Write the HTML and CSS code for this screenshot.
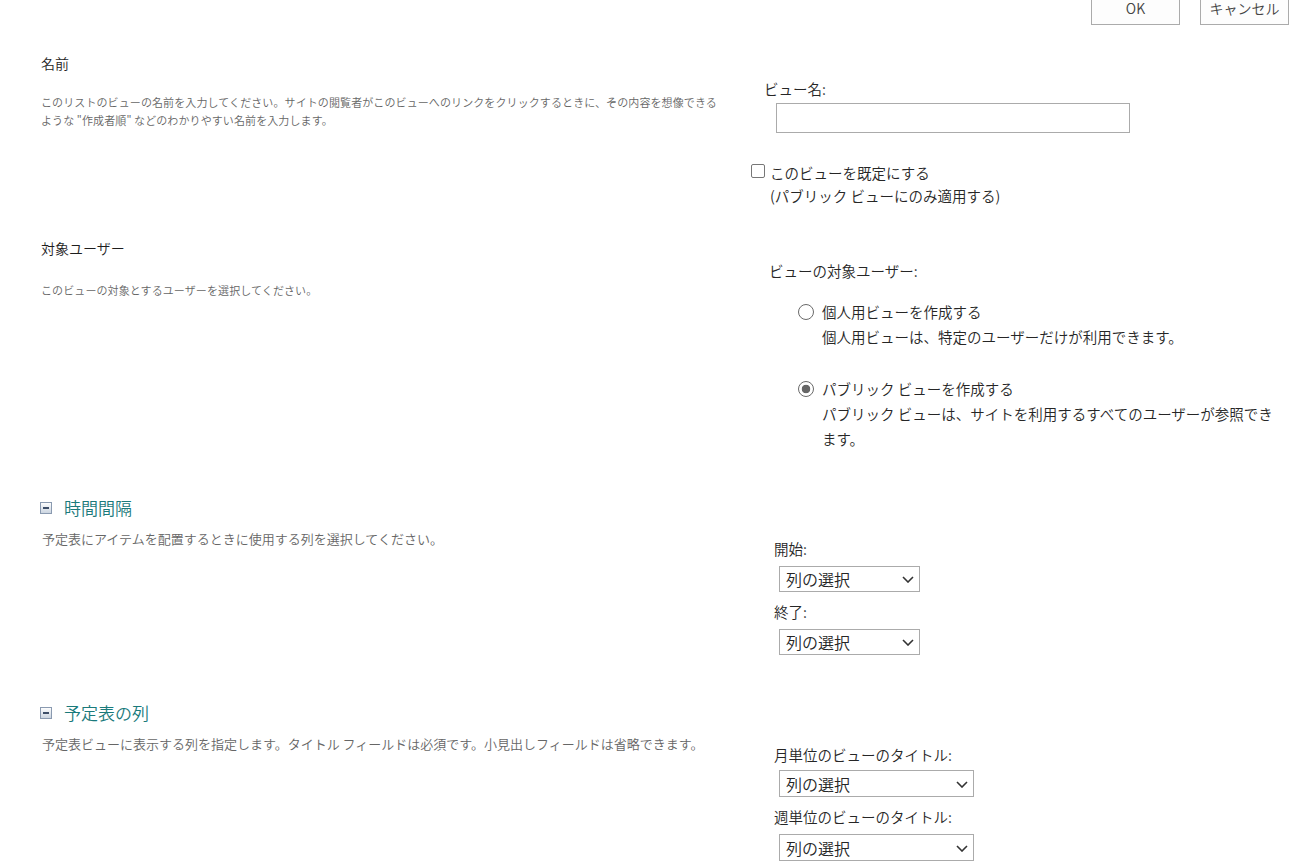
FILE: index.html
```html
<!DOCTYPE html>
<html lang="ja">
<head>
<meta charset="utf-8">
<title>ビューの作成</title>
<link rel="stylesheet" href="styles.css">
</head>
<body>
<div class="page">
  <div class="toolbar">
    <button class="btn" type="button">OK</button>
    <button class="btn" type="button">キャンセル</button>
  </div>

  <section class="sec sec-name">
    <div class="left">
      <h3 class="head">名前</h3>
      <p class="desc-s">このリストのビューの名前を入力してください。サイトの閲覧者がこのビューへのリンクをクリックするときに、その内容を想像できる<br>ような "作成者順" などのわかりやすい名前を入力します。</p>
    </div>
    <div class="right right-name">
      <div class="label label-name">ビュー名:</div>
      <input class="text-input" type="text">
      <label class="check-row">
        <input class="check" type="checkbox">
        <span class="check-text">このビューを既定にする<br>(パブリック ビューにのみ適用する)</span>
      </label>
    </div>
  </section>

  <section class="sec sec-audience">
    <div class="left">
      <h3 class="head">対象ユーザー</h3>
      <p class="desc-s desc-aud">このビューの対象とするユーザーを選択してください。</p>
    </div>
    <div class="right right-aud">
      <div class="label label-aud">ビューの対象ユーザー:</div>
      <div class="options">
        <label class="option">
          <input class="radio" type="radio" name="aud">
          <span class="option-text">個人用ビューを作成する<br>個人用ビューは、特定のユーザーだけが利用できます。</span>
        </label>
        <label class="option">
          <input class="radio" type="radio" name="aud" checked>
          <span class="option-text">パブリック ビューを作成する<br>パブリック ビューは、サイトを利用するすべてのユーザーが参照できます。</span>
        </label>
      </div>
    </div>
  </section>

  <section class="sec sec-interval">
    <div class="left">
      <h3 class="sec-title">
        <svg class="collapse" width="12" height="12" viewBox="0 0 12 12" aria-hidden="true">
          <defs>
            <linearGradient id="cg1" x1="0" y1="0" x2="0" y2="1">
              <stop offset="0" stop-color="#ffffff"/>
              <stop offset="1" stop-color="#c9d3df"/>
            </linearGradient>
          </defs>
          <rect x="0.5" y="0.5" width="11" height="11" fill="url(#cg1)" stroke="#8a9ab0"/>
          <rect x="3" y="5" width="6" height="2" fill="#3d4e68"/>
        </svg>
        <span>時間間隔</span>
      </h3>
      <p class="desc-m">予定表にアイテムを配置するときに使用する列を選択してください。</p>
    </div>
    <div class="right right-interval">
      <div class="label label-sel">開始:</div>
      <div class="select-wrap sel-short">
        <select class="select"><option>列の選択</option></select>
        <svg class="chev" width="12" height="7" viewBox="0 0 12 7" aria-hidden="true"><path d="M1 1l5 5 5-5" fill="none" stroke="#333" stroke-width="1.6"/></svg>
      </div>
      <div class="label label-sel label-next">終了:</div>
      <div class="select-wrap sel-short">
        <select class="select"><option>列の選択</option></select>
        <svg class="chev" width="12" height="7" viewBox="0 0 12 7" aria-hidden="true"><path d="M1 1l5 5 5-5" fill="none" stroke="#333" stroke-width="1.6"/></svg>
      </div>
    </div>
  </section>

  <section class="sec sec-columns">
    <div class="left">
      <h3 class="sec-title">
        <svg class="collapse" width="12" height="12" viewBox="0 0 12 12" aria-hidden="true">
          <defs>
            <linearGradient id="cg2" x1="0" y1="0" x2="0" y2="1">
              <stop offset="0" stop-color="#ffffff"/>
              <stop offset="1" stop-color="#c9d3df"/>
            </linearGradient>
          </defs>
          <rect x="0.5" y="0.5" width="11" height="11" fill="url(#cg2)" stroke="#8a9ab0"/>
          <rect x="3" y="5" width="6" height="2" fill="#3d4e68"/>
        </svg>
        <span>予定表の列</span>
      </h3>
      <p class="desc-m">予定表ビューに表示する列を指定します。タイトル フィールドは必須です。小見出しフィールドは省略できます。</p>
    </div>
    <div class="right right-columns">
      <div class="label label-sel">月単位のビューのタイトル:</div>
      <div class="select-wrap sel-long sel-first">
        <select class="select"><option>列の選択</option></select>
        <svg class="chev" width="12" height="7" viewBox="0 0 12 7" aria-hidden="true"><path d="M1 1l5 5 5-5" fill="none" stroke="#333" stroke-width="1.6"/></svg>
      </div>
      <div class="label label-sel label-next">週単位のビューのタイトル:</div>
      <div class="select-wrap sel-long">
        <select class="select"><option>列の選択</option></select>
        <svg class="chev" width="12" height="7" viewBox="0 0 12 7" aria-hidden="true"><path d="M1 1l5 5 5-5" fill="none" stroke="#333" stroke-width="1.6"/></svg>
      </div>
    </div>
  </section>
</div>
</body>
</html>
```

FILE: styles.css
```css
* {
  box-sizing: border-box;
}

html, body {
  margin: 0;
  padding: 0;
  background: #ffffff;
}

body {
  font-family: "Noto Sans CJK JP", "Noto Sans", sans-serif;
  font-weight: 350;
  color: #262626;
  overflow: hidden;
}

.page {
  width: 1315px;
}

/* top buttons */
.toolbar {
  display: flex;
  justify-content: flex-end;
  align-items: flex-end;
  gap: 20px;
  height: 25px;
  padding-right: 26px;
}

.btn {
  flex: none;
  width: 89px;
  height: 35px;
  border: 1px solid #ababab;
  background: #fdfdfd;
  color: #444444;
  font-family: "Noto Sans CJK JP", "Noto Sans", sans-serif;
  font-weight: 350;
  font-size: 14px;
  line-height: 1;
  padding: 0;
}

/* sections */
.sec {
  display: flex;
  align-items: flex-start;
}

.left {
  flex: none;
  width: 750px;
  padding-left: 41px;
}

.right {
  flex: 1;
}

.head {
  margin: 0;
  font-size: 14px;
  line-height: 20px;
  font-weight: 350;
  color: #1e1e1e;
}

.desc-s {
  margin: 20px 0 0;
  font-size: 11px;
  line-height: 18px;
  color: #666666;
  letter-spacing: 0.1px;
}

.desc-aud {
  margin-top: 23px;
}

.label {
  font-size: 14.5px;
  line-height: 20px;
  color: #262626;
}

/* section 1 */
.sec-name {
  margin-top: 28px;
}

.right-name {
  padding-top: 26px;
}

.label-name {
  padding-left: 14px;
}

.text-input {
  display: block;
  margin: 4px 0 0 26px;
  width: 354px;
  height: 30px;
  border: 1px solid #ababab;
  background: #ffffff;
  outline: none;
}

.check-row {
  display: flex;
  align-items: flex-start;
  margin-top: 28px;
}

.check {
  appearance: none;
  -webkit-appearance: none;
  flex: none;
  width: 14px;
  height: 14px;
  margin: 3px 5px 0 1px;
  border: 1px solid #777777;
  border-radius: 2px;
  background: #ffffff;
}

.check-text {
  font-size: 14.5px;
  line-height: 23px;
  color: #262626;
}

/* section 2 */
.sec-audience {
  margin-top: 31px;
}

.right-aud {
  padding-top: 23px;
}

.label-aud {
  padding-left: 19px;
}

.options {
  padding-left: 48px;
  margin-top: 18px;
}

.option {
  display: flex;
  align-items: flex-start;
  gap: 8px;
}

.option + .option {
  margin-top: 27px;
}

.radio {
  appearance: none;
  -webkit-appearance: none;
  flex: none;
  width: 16px;
  height: 16px;
  margin: 5px 0 0;
  border: 1px solid #6a6a6a;
  border-radius: 50%;
  background: #ffffff;
}

.radio:checked {
  background: radial-gradient(circle, #666666 0 4px, #ffffff 4.6px);
}

.option-text {
  width: 456px;
  font-size: 14.5px;
  line-height: 25px;
  color: #262626;
}

/* collapsible sections */
.sec-interval {
  margin-top: 45px;
}

.sec-columns {
  margin-top: 46px;
}

.sec-title {
  display: flex;
  align-items: center;
  gap: 12px;
  margin: 0 0 0 -1px;
  font-size: 17px;
  line-height: 24px;
  font-weight: 350;
  color: #1a7a7b;
}

.collapse {
  flex: none;
  display: block;
}

.desc-m {
  margin: 9px 0 0 1px;
  font-size: 13px;
  line-height: 20px;
  color: #666666;
}

.right-interval {
  padding-top: 43px;
}

.right-columns {
  padding-top: 44px;
}

.label-sel {
  padding-left: 24px;
}

.label-next {
  margin-top: 10px;
}

.select-wrap {
  position: relative;
  margin: 7px 0 0 29px;
}

.sel-short {
  width: 141px;
  height: 26px;
}

.sel-long {
  width: 195px;
  height: 27px;
}

.sel-first {
  margin-top: 5px;
}

.select {
  appearance: none;
  -webkit-appearance: none;
  display: block;
  width: 100%;
  height: 100%;
  margin: 0;
  padding: 0 0 0 6px;
  border: 1px solid #ababab;
  border-radius: 0;
  background: #ffffff;
  color: #262626;
  font-family: "Noto Sans CJK JP", "Noto Sans", sans-serif;
  font-weight: 350;
  font-size: 16px;
  outline: none;
}

.chev {
  position: absolute;
  right: 6px;
  top: 50%;
  margin-top: -3px;
  pointer-events: none;
}
```
